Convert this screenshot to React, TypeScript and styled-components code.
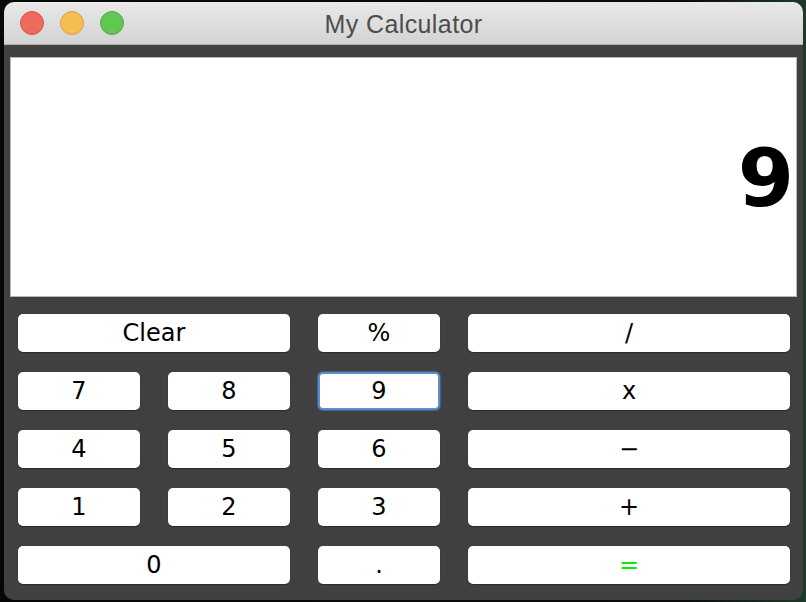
import React from "react";
import styled, { createGlobalStyle } from "styled-components";

const Global = createGlobalStyle`
  html, body { margin: 0; padding: 0; }
  body {
    background: linear-gradient(90deg, #060806 0%, #0a0d0a 85%, #1d3a2a 100%);
    width: 806px; height: 602px; overflow: hidden;
  }
`;

const Desk = styled.div`
  padding: 2px 3px 2px 4px;
  display: flex;
`;

const Window = styled.div`
  width: 799px;
  height: 598px;
  border-radius: 10px;
  overflow: hidden;
  background: #404040;
  display: flex;
  flex-direction: column;
`;

const TitleBar = styled.div`
  height: 42px;
  border-bottom: 1px solid #b3b3b3;
  background: linear-gradient(#e9e9e9, #d3d3d3);
  display: grid;
  grid-template-columns: 1fr auto 1fr;
  align-items: center;
`;

const Lights = styled.div`
  display: flex;
  gap: 16px;
  padding-left: 16px;
`;

const Light = styled.span<{ $c: string; $b: string }>`
  width: 22px;
  height: 22px;
  border-radius: 50%;
  background: ${(p) => p.$c};
  border: 1px solid ${(p) => p.$b};
`;

const Title = styled.div`
  font-family: "Liberation Sans", Arial, sans-serif;
  font-size: 25px;
  letter-spacing: 0.4px;
  color: #4d4d4d;
  padding-top: 3px;
`;

const Display = styled.div`
  margin: 12px 6px 0;
  height: 240px;
  box-sizing: border-box;
  background: #fff;
  border: 1px solid #b8b8b8;
  display: flex;
  align-items: center;
  justify-content: flex-end;
  padding-right: 2px;
  padding-top: 2px;
  font-family: "DejaVu Sans", Verdana, sans-serif;
  font-weight: bold;
  font-size: 81px;
  color: #000;
`;

const Pad = styled.div`
  padding: 17px 13px 16px 14px;
  display: grid;
  grid-template-columns: 122px 122px 122px 322px;
  grid-auto-rows: 38px;
  column-gap: 28px;
  row-gap: 20px;
`;

const Key = styled.button<{ $span?: number; $focus?: boolean; $color?: string }>`
  grid-column: span ${(p) => p.$span ?? 1};
  margin: 0;
  padding: 0;
  box-sizing: border-box;
  background: #fff;
  border-radius: 5px;
  border: ${(p) => (p.$focus ? "2px solid #5b8dd3" : "none")};
  box-shadow: ${(p) =>
    p.$focus
      ? "0 0 1px 1px rgba(90,140,210,0.45)"
      : "0 1px 1px rgba(0,0,0,0.35)"};
  font-family: "DejaVu Sans", Verdana, sans-serif;
  font-size: 24px;
  color: ${(p) => p.$color ?? "#000"};
  display: flex;
  align-items: center;
  justify-content: center;
  line-height: 1;
`;

export default function App() {
  return (
    <>
      <Global />
      <Desk>
        <Window>
          <TitleBar>
            <Lights>
              <Light $c="#ee6a5f" $b="#d4544b" />
              <Light $c="#f6be50" $b="#d9a241" />
              <Light $c="#62c655" $b="#50a843" />
            </Lights>
            <Title>My Calculator</Title>
            <div />
          </TitleBar>
          <Display>9</Display>
          <Pad>
            <Key $span={2}>Clear</Key>
            <Key>%</Key>
            <Key>/</Key>
            <Key>7</Key>
            <Key>8</Key>
            <Key $focus>9</Key>
            <Key>x</Key>
            <Key>4</Key>
            <Key>5</Key>
            <Key>6</Key>
            <Key>−</Key>
            <Key>1</Key>
            <Key>2</Key>
            <Key>3</Key>
            <Key>+</Key>
            <Key $span={2}>0</Key>
            <Key>.</Key>
            <Key $color="#00ee00">=</Key>
          </Pad>
        </Window>
      </Desk>
    </>
  );
}
